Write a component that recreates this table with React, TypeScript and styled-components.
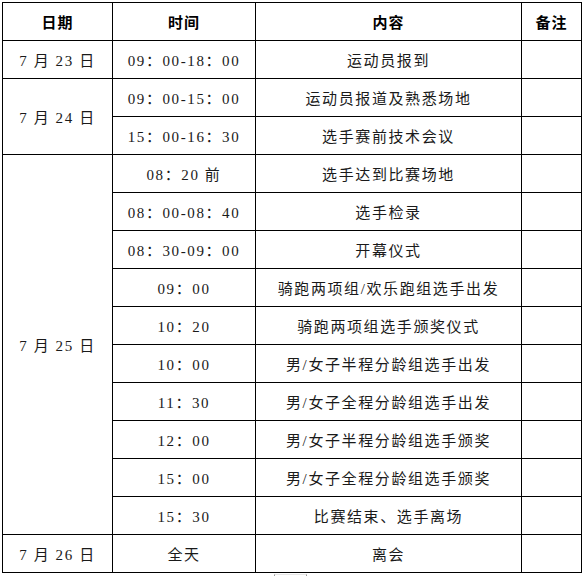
import React from 'react';
import styled, { createGlobalStyle } from 'styled-components';

const GlobalStyle = createGlobalStyle`
  html, body {
    margin: 0;
    padding: 0;
    background: #ffffff;
  }
  body {
    font-family: "Liberation Serif", "Noto Sans CJK SC", serif;
    color: #111;
  }
`;

const Page = styled.div`
  padding: 2px 0 0 2px;
`;

const Table = styled.table`
  border-collapse: collapse;
  table-layout: fixed;
  width: 579px;
`;

const Th = styled.th`
  border: 1px solid #000;
  height: 37px;
  padding: 0;
  font-family: "Noto Sans CJK SC", sans-serif;
  font-weight: 700;
  font-size: 15px;
  letter-spacing: 1px;
  text-align: center;
  vertical-align: middle;
  color: #000;
`;

const Td = styled.td`
  border: 1px solid #000;
  height: 37px;
  padding: 0;
  font-family: "Liberation Serif", "Noto Sans CJK SC", serif;
  font-size: 15px;
  letter-spacing: 1.6px;
  text-align: center;
  vertical-align: middle;
  white-space: nowrap;
  color: #1a1a1a;
`;

const PageMark = styled.div`
  margin: 1px 0 0 272px;
  width: 31px;
  height: 2px;
  border-top: 1px solid #e6e6e6;
  border-left: 1px solid #999;
  border-right: 1px solid #999;
`;

interface Slot {
  time: string;
  content: string;
}

interface Day {
  date: string;
  slots: Slot[];
}

const schedule: Day[] = [
  { date: '7 月 23 日', slots: [{ time: '09：00-18：00', content: '运动员报到' }] },
  {
    date: '7 月 24 日',
    slots: [
      { time: '09：00-15：00', content: '运动员报道及熟悉场地' },
      { time: '15：00-16：30', content: '选手赛前技术会议' },
    ],
  },
  {
    date: '7 月 25 日',
    slots: [
      { time: '08：20 前', content: '选手达到比赛场地' },
      { time: '08：00-08：40', content: '选手检录' },
      { time: '08：30-09：00', content: '开幕仪式' },
      { time: '09：00', content: '骑跑两项组/欢乐跑组选手出发' },
      { time: '10：20', content: '骑跑两项组选手颁奖仪式' },
      { time: '10：00', content: '男/女子半程分龄组选手出发' },
      { time: '11：30', content: '男/女子全程分龄组选手出发' },
      { time: '12：00', content: '男/女子半程分龄组选手颁奖' },
      { time: '15：00', content: '男/女子全程分龄组选手颁奖' },
      { time: '15：30', content: '比赛结束、选手离场' },
    ],
  },
  { date: '7 月 26 日', slots: [{ time: '全天', content: '离会' }] },
];

const App: React.FC = () => {
  return (
    <Page>
      <GlobalStyle />
      <Table>
        <colgroup>
          <col style={{ width: 110 }} />
          <col style={{ width: 143 }} />
          <col style={{ width: 266 }} />
          <col style={{ width: 60 }} />
        </colgroup>
        <thead>
          <tr>
            <Th>日期</Th>
            <Th>时间</Th>
            <Th>内容</Th>
            <Th>备注</Th>
          </tr>
        </thead>
        <tbody>
          {schedule.map(day =>
            day.slots.map((slot, i) => (
              <tr key={day.date + slot.time + i}>
                {i === 0 && <Td rowSpan={day.slots.length}>{day.date}</Td>}
                <Td>{slot.time}</Td>
                <Td>{slot.content}</Td>
                <Td />
              </tr>
            ))
          )}
        </tbody>
      </Table>
      <PageMark />
    </Page>
  );
};

export default App;
